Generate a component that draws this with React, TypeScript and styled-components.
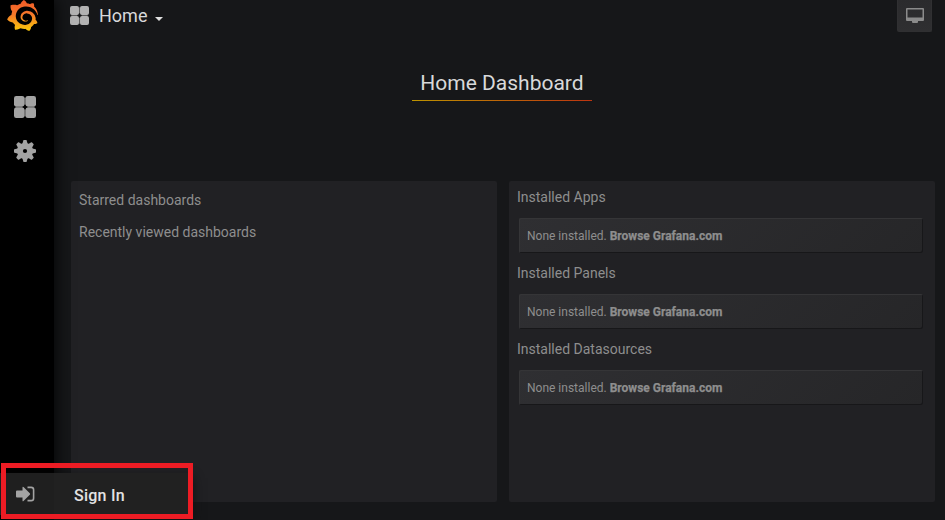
import React from "react";
import styled, { createGlobalStyle } from "styled-components";
import { SiGrafana } from "react-icons/si";

const GlobalStyle = createGlobalStyle`
  * { box-sizing: border-box; }
  body {
    margin: 0;
    background: #161719;
    color: #d8d9da;
    font-family: Roboto, "Liberation Sans", sans-serif;
    overflow: hidden;
  }
`;

const Page = styled.div`
  display: flex;
  position: relative;
  width: 945px;
  height: 520px;
  overflow: hidden;
`;

const Sidebar = styled.nav`
  display: flex;
  flex-direction: column;
  align-items: center;
  width: 54px;
  padding-right: 4px;
  background: #000;
  box-shadow: 0 0 16px #000;
  z-index: 1;
`;

const Logo = styled.div`
  width: 31px;
  height: 32px;
  margin: 0 6px 64px 0;
`;

const LogoDrawing = styled.svg`
  display: block;
  width: 31px;
  height: 31px;
`;

const LogoMark = styled(SiGrafana)`
  fill: url(#flame);
  width: 24px;
  height: 24px;
`;

const NavItem = styled.a`
  display: flex;
  align-items: center;
  justify-content: center;
  width: 50px;
  height: 22px;
  margin-bottom: 22px;
  color: #a3a3a3;
`;

const Main = styled.main`
  display: flex;
  flex-direction: column;
  flex: 1;
`;

const Navbar = styled.header`
  display: flex;
  align-items: flex-start;
  justify-content: space-between;
  height: 52px;
  padding: 0 13px 0 16px;
`;

const PageTitle = styled.div`
  display: flex;
  align-items: center;
  height: 31px;
  color: #b3b3b3;
`;

const TitleText = styled.span`
  margin-left: 10px;
  color: #d8d9da;
  font-size: 18px;
  line-height: 30px;
`;

const Caret = styled.span`
  margin: 6px 0 0 8px;
  border: 4px solid transparent;
  border-top-color: #e0e0e0;
  border-bottom: 0;
`;

const ViewButton = styled.button`
  display: flex;
  align-items: center;
  justify-content: center;
  width: 35px;
  height: 32px;
  padding: 0;
  border: 1px solid #303032;
  border-top: 0;
  border-radius: 0 0 2px 2px;
  background: linear-gradient(#2b2b2d, #2f2f31);
`;

const Heading = styled.h1`
  align-self: center;
  width: 180px;
  height: 49px;
  margin: 0 0 80px 5px;
  padding-top: 18px;
  border-bottom: 1px solid;
  border-image: linear-gradient(to right, #bd9400, #bd3410) 1;
  font-size: 21px;
  font-weight: 400;
  line-height: 27px;
  text-align: center;
`;

const Panels = styled.div`
  display: grid;
  grid-template-columns: 426px 426px;
  gap: 12px;
  margin-left: 17px;
`;

const Panel = styled.section<{ $top: number }>`
  height: 321px;
  padding: ${({ $top }) => $top}px 8px 0;
  border-radius: 2px;
  background: #212124;
`;

const ListTitle = styled.h2<{ $gap: number }>`
  margin: 0 0 ${({ $gap }) => $gap}px;
  color: #8e8e8e;
  font-size: 14px;
  font-weight: 400;
  line-height: 20px;
`;

const EmptyCard = styled.div`
  width: 404px;
  height: 35px;
  margin: 0 0 10px 2px;
  padding-left: 8px;
  border-radius: 2px;
  background: linear-gradient(135deg, #2f2f32, #262628);
  box-shadow: inset 1px 1px #353537, inset -1px -1px #171719;
  color: #8e8e8e;
  font-size: 12px;
  line-height: 36px;
  strong { font-weight: 700; -webkit-text-stroke: 0.25px; }
`;

const SignIn = styled.a`
  display: flex;
  align-items: center;
  position: absolute;
  left: 0;
  top: 473px;
  width: 188px;
  height: 42px;
  background: linear-gradient(to right, #1f1f1f 54px, #212121 54px);
  box-shadow: 5px 5px 10px #101012;
  color: #a3a3a3;
  font-size: 16px;
  font-weight: 500;
  z-index: 2;
  svg { margin: 0 0 0 16px; }
`;

const SignInLabel = styled.span`
  margin: 3px 0 0 39px;
  color: #e3e3e3;
  letter-spacing: 0.25px;
`;

const Highlight = styled.div`
  position: absolute;
  left: 1px;
  top: 463px;
  width: 192px;
  height: 56px;
  border: 5px solid #ed1c24;
  z-index: 3;
`;

const GridIcon = ({ size }: { size: number }) => (
  <svg width={size} height={size} viewBox="0 0 22 22">
    <path d="M11 1.5v7M11 13.5v7M1.5 11h7M13.5 11h7" stroke="#5c5c5c" strokeWidth="2" />
    <g fill="currentColor">
      <rect width="10.4" height="10.4" rx="2.2" />
      <rect x="11.6" width="10.4" height="10.4" rx="2.2" />
      <rect y="11.6" width="10.4" height="10.4" rx="2.2" />
      <rect x="11.6" y="11.6" width="10.4" height="10.4" rx="2.2" />
    </g>
  </svg>
);

const GearIcon = () => (
  <svg width="22" height="22" viewBox="-11 -11 22 22" fill="currentColor">
    {[0, 45, 90, 135, 180, 225, 270, 315].map((angle) => (
      <path key={angle} d="M-2.8-6.5L-1.7-10.5Q-1.5-11-1-11H1Q1.5-11 1.7-10.5L2.8-6.5Z" transform={`rotate(${angle})`} />
    ))}
    <circle r="8" />
    <circle r="2.1" fill="#000" />
  </svg>
);

const apps = ["Installed Apps", "Installed Panels", "Installed Datasources"];

export default function App() {
  return (
    <>
      <GlobalStyle />
      <Page>
        <Sidebar>
          <Logo>
            <LogoDrawing viewBox="0.8 0 22.4 24" preserveAspectRatio="none">
              <defs>
                <linearGradient id="flame" x1="0" y1="0" x2="0" y2="24" gradientUnits="userSpaceOnUse">
                  <stop offset="0" stopColor="#f05a28" />
                  <stop offset="0.45" stopColor="#f5762a" />
                  <stop offset="1" stopColor="#fbca0a" />
                </linearGradient>
              </defs>
              <LogoMark />
            </LogoDrawing>
          </Logo>
          <NavItem><GridIcon size={22} /></NavItem>
          <NavItem><GearIcon /></NavItem>
        </Sidebar>
        <Main>
          <Navbar>
            <PageTitle>
              <GridIcon size={19} />
              <TitleText>Home</TitleText>
              <Caret />
            </PageTitle>
            <ViewButton>
              <svg width="18" height="15" viewBox="0 0 18 15">
                <path fillRule="evenodd" fill="#8b8b8b" d="M1 0h16q1 0 1 1v11q0 1-1 1h-5v1q0 1-1 1H7q-1 0-1-1v-1H1q-1 0-1-1V1Q0 0 1 0zM1.5 1.5v8h15v-8z" />
              </svg>
            </ViewButton>
          </Navbar>
          <Heading>Home Dashboard</Heading>
          <Panels>
            <Panel $top={9}>
              <ListTitle $gap={12}>Starred dashboards</ListTitle>
              <ListTitle $gap={0}>Recently viewed dashboards</ListTitle>
            </Panel>
            <Panel $top={6}>
              {apps.map((title) => (
                <React.Fragment key={title}>
                  <ListTitle $gap={11}>{title}</ListTitle>
                  <EmptyCard>None installed. <strong>Browse Grafana.com</strong></EmptyCard>
                </React.Fragment>
              ))}
            </Panel>
          </Panels>
        </Main>
        <SignIn>
          <svg width="19" height="16" viewBox="0 0 19 16">
            <path d="M1 4.5h5.5V1.6q0-1.4 1-.6l6.3 6.2q.8.8 0 1.6L7.5 15q-1 .8-1-.6v-2.9H1q-1 0-1-1v-5q0-1 1-1z" fill="currentColor" />
            <path d="M11.5 1.4h3.7q2.4 0 2.4 2.4v8.4q0 2.4-2.4 2.4h-3.7" fill="none" stroke="currentColor" strokeWidth="1.6" />
          </svg>
          <SignInLabel>Sign In</SignInLabel>
        </SignIn>
        <Highlight />
      </Page>
    </>
  );
}
